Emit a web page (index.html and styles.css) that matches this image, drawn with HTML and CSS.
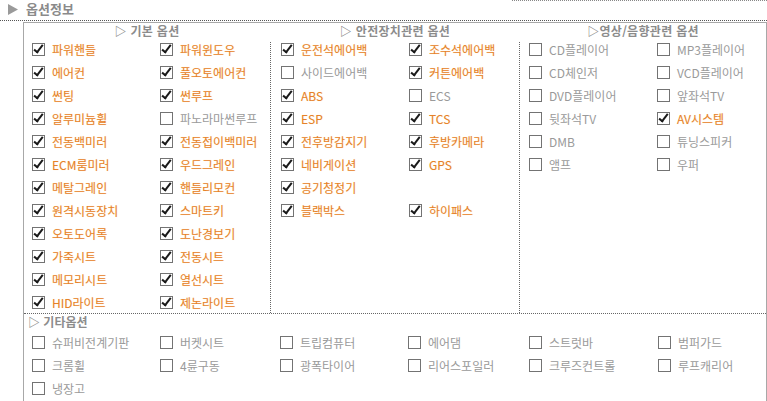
FILE: index.html
```html
<!DOCTYPE html>
<html lang="ko">
<head>
    <meta charset="UTF-8">
    <meta name="viewport" content="width=device-width, initial-scale=1.0">
    <title>옵션정보</title>
    <link rel="stylesheet" href="styles.css">
</head>
<body>
    <div class="title-bar">
        <h2 class="title">
            <svg class="arrow" width="10" height="11" viewBox="0 0 10 11"><polygon points="0,0 10,5.5 0,11" fill="#9a9a9a"/></svg>
            옵션정보
        </h2>
        <span class="title-rule"></span>
    </div>

    <div class="option-box">
        <div class="option-cols">
            <div class="option-col">
                <div class="col-head">▷ 기본 옵션</div>
                <div class="col-body">
                    <ul class="check-grid">
                        <li class="on"><i class="cb"></i>파워핸들</li>
                        <li class="on"><i class="cb"></i>파워윈도우</li>
                        <li class="on"><i class="cb"></i>에어컨</li>
                        <li class="on"><i class="cb"></i>풀오토에어컨</li>
                        <li class="on"><i class="cb"></i>썬팅</li>
                        <li class="on"><i class="cb"></i>썬루프</li>
                        <li class="on"><i class="cb"></i>알루미늄휠</li>
                        <li><i class="cb"></i>파노라마썬루프</li>
                        <li class="on"><i class="cb"></i>전동백미러</li>
                        <li class="on"><i class="cb"></i>전동접이백미러</li>
                        <li class="on"><i class="cb"></i>ECM룸미러</li>
                        <li class="on"><i class="cb"></i>우드그레인</li>
                        <li class="on"><i class="cb"></i>메탈그레인</li>
                        <li class="on"><i class="cb"></i>핸들리모컨</li>
                        <li class="on"><i class="cb"></i>원격시동장치</li>
                        <li class="on"><i class="cb"></i>스마트키</li>
                        <li class="on"><i class="cb"></i>오토도어록</li>
                        <li class="on"><i class="cb"></i>도난경보기</li>
                        <li class="on"><i class="cb"></i>가죽시트</li>
                        <li class="on"><i class="cb"></i>전동시트</li>
                        <li class="on"><i class="cb"></i>메모리시트</li>
                        <li class="on"><i class="cb"></i>열선시트</li>
                        <li class="on"><i class="cb"></i>HID라이트</li>
                        <li class="on"><i class="cb"></i>제논라이트</li>
                    </ul>
                </div>
            </div>

            <div class="option-col mid">
                <div class="col-head">▷ 안전장치관련 옵션</div>
                <div class="col-body">
                    <ul class="check-grid">
                        <li class="on"><i class="cb"></i>운전석에어백</li>
                        <li class="on"><i class="cb"></i>조수석에어백</li>
                        <li><i class="cb"></i>사이드에어백</li>
                        <li class="on"><i class="cb"></i>커튼에어백</li>
                        <li class="on"><i class="cb"></i>ABS</li>
                        <li><i class="cb"></i>ECS</li>
                        <li class="on"><i class="cb"></i>ESP</li>
                        <li class="on"><i class="cb"></i>TCS</li>
                        <li class="on"><i class="cb"></i>전후방감지기</li>
                        <li class="on"><i class="cb"></i>후방카메라</li>
                        <li class="on"><i class="cb"></i>네비게이션</li>
                        <li class="on"><i class="cb"></i>GPS</li>
                        <li class="on"><i class="cb"></i>공기청정기</li>
                        <li></li>
                        <li class="on"><i class="cb"></i>블랙박스</li>
                        <li class="on"><i class="cb"></i>하이패스</li>
                    </ul>
                </div>
            </div>

            <div class="option-col last">
                <div class="col-head">▷영상/음향관련 옵션</div>
                <div class="col-body">
                    <ul class="check-grid">
                        <li><i class="cb"></i>CD플레이어</li>
                        <li><i class="cb"></i>MP3플레이어</li>
                        <li><i class="cb"></i>CD체인저</li>
                        <li><i class="cb"></i>VCD플레이어</li>
                        <li><i class="cb"></i>DVD플레이어</li>
                        <li><i class="cb"></i>앞좌석TV</li>
                        <li><i class="cb"></i>뒷좌석TV</li>
                        <li class="on"><i class="cb"></i>AV시스템</li>
                        <li><i class="cb"></i>DMB</li>
                        <li><i class="cb"></i>튜닝스피커</li>
                        <li><i class="cb"></i>앰프</li>
                        <li><i class="cb"></i>우퍼</li>
                    </ul>
                </div>
            </div>
        </div>

        <div class="etc">
            <div class="etc-head">▷ 기타옵션</div>
            <ul class="check-grid">
                <li><i class="cb"></i>슈퍼비전계기판</li>
                <li><i class="cb"></i>버켓시트</li>
                <li><i class="cb"></i>트립컴퓨터</li>
                <li><i class="cb"></i>에어댐</li>
                <li><i class="cb"></i>스트럿바</li>
                <li><i class="cb"></i>범퍼가드</li>
                <li><i class="cb"></i>크롬휠</li>
                <li><i class="cb"></i>4륜구동</li>
                <li><i class="cb"></i>광폭타이어</li>
                <li><i class="cb"></i>리어스포일러</li>
                <li><i class="cb"></i>크루즈컨트롤</li>
                <li><i class="cb"></i>루프캐리어</li>
                <li><i class="cb"></i>냉장고</li>
            </ul>
        </div>
    </div>
</body>
</html>
```

FILE: styles.css
```css
body {
    margin: 0;
    font-family: "Noto Sans CJK KR", "Noto Sans", sans-serif;
    font-size: 12px;
    color: #9a9a9a;
    background-color: #fff;
}
.title-bar {
    display: flex;
    height: 20px;
    border-bottom: 1px dotted #555;
}
.title {
    margin: 0;
    height: 18px;
    line-height: 18px;
    display: flex;
    align-items: center;
    font-size: 13px;
    font-weight: bold;
    color: #8a8a8a;
}
.arrow {
    margin: 0 8px;
}
.title-rule {
    margin-left: auto;
    width: 255px;
    align-self: flex-start;
    border-top: 1px dotted #888;
}
.option-box {
    width: 742px;
    margin: 1px 0 0 23px;
    border: 1px solid #a8a8a8;
    padding-bottom: 12px;
}
.option-cols {
    display: flex;
}
.option-col {
    width: 246px;
    display: flex;
    flex-direction: column;
}
.option-col.mid {
    width: 250px;
}
.col-head {
    height: 19px;
    line-height: 15px;
    text-align: center;
    font-size: 12px;
    font-weight: bold;
    letter-spacing: 0.3px;
    color: #8c8c8c;
}
.col-body {
    flex: 1;
    padding: 1px 0 4px 8px;
}
.mid .col-body {
    border-left: 1px dotted #666;
    border-right: 1px dotted #666;
    padding-left: 10px;
}
.last .col-body {
    padding-left: 9px;
}
.check-grid {
    list-style: none;
    margin: 0;
    padding: 0;
    display: grid;
    grid-template-columns: 128px 128px;
    grid-auto-rows: 13px;
    row-gap: 10px;
}
.check-grid li {
    display: flex;
    align-items: center;
    white-space: nowrap;
    line-height: 13px;
}
.cb {
    position: relative;
    flex: none;
    width: 13px;
    height: 13px;
    box-sizing: border-box;
    border: 1px solid #737373;
    background-color: #fff;
    margin-right: 7px;
}
.on {
    color: #e5822a;
    text-shadow: 0 0 1px #ffe2bd;
}
.on .cb::after {
    content: "";
    position: absolute;
    left: 3px;
    top: -1px;
    width: 3px;
    height: 8px;
    border: solid #1a1a1a;
    border-width: 0 2px 2px 0;
    transform: rotate(38deg);
}
.etc {
    border-top: 1px dotted #666;
}
.etc-head {
    padding-left: 4px;
    line-height: 16px;
    margin-bottom: 6px;
    font-weight: bold;
    color: #8c8c8c;
}
.etc .check-grid {
    padding-left: 8px;
    grid-template-columns: 128px 120px 128px 121px 129px 1fr;
}
```
